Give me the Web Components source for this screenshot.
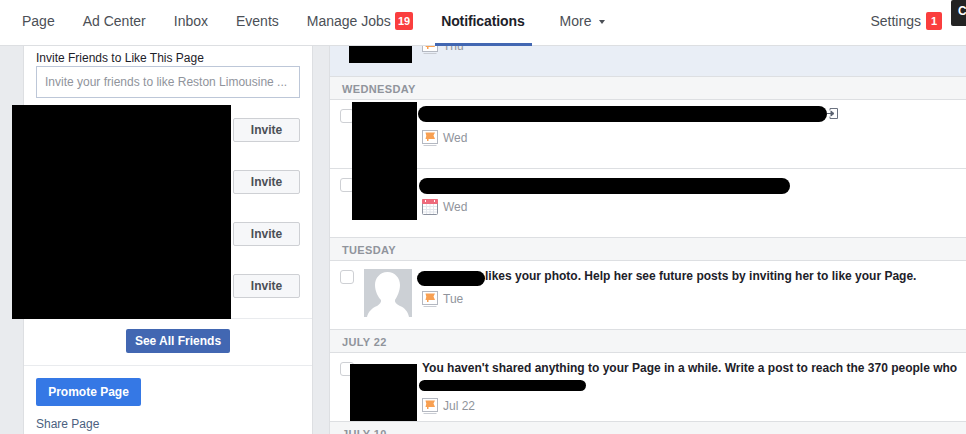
<!DOCTYPE html>
<html><head><meta charset="utf-8"><style>
html,body{margin:0;padding:0;height:434px;overflow:hidden;background:#e9ebee;font-family:"Liberation Sans",Arial,sans-serif}
</style></head><body>
<fb-app></fb-app>
<script>
const def=(name,css,html)=>{customElements.define(name,class extends HTMLElement{
  constructor(){super();this.attachShadow({mode:'open'}).innerHTML=`<style>${css}</style>${typeof html==='function'?html(this):html}`;}
});};
const A=(e,n,d='')=>e.getAttribute(n)??d;
const FLAG=`<svg width="16" height="16" viewBox="0 0 16 16"><rect x=".5" y=".5" width="15" height="13" fill="#fff" stroke="#b4b8c1"/><path d="M1.500 15.500h13" stroke="#c9ccd3"/><path d="M3.500 2.500H13l-1.500 3L13 9H6.500v2H5V9H3.500l.8-3.200z" fill="#f8a052"/></svg>`;
const CAL=`<svg width="16" height="16" viewBox="0 0 16 16"><rect x=".5" y=".5" width="15" height="15" rx="1" fill="#fff" stroke="#8d93a0"/><rect x="0" y="0" width="16" height="5" rx="1" fill="#ee6a7c"/><path d="M3.500 1v2M12.500 1v2" stroke="#fff"/><path d="M1 7.500h14M1 10.500h14M1 13h14M4.500 5v10M8 5v10M11.500 5v10" stroke="#e3e6ec"/></svg>`;
def('nav-tab',`:host{display:flex;align-items:center;height:45px;padding-bottom:3px;font-size:14px;color:#4b4f56;white-space:nowrap;position:relative;box-sizing:border-box}
:host([active]){font-weight:bold;color:#1d2129;letter-spacing:-.1px}
:host([active])::after{content:"";position:absolute;left:-6px;right:-7px;bottom:-1px;height:3px;background:#4267b2}`,`<span><slot></slot></span>`);
def('nav-badge',`:host{display:block;background:#fa3e3e;color:#fff;font:bold 11px/18px "Liberation Sans",Arial,sans-serif;height:18px;box-sizing:border-box;padding:0 3px;min-width:16px;text-align:center;border-radius:2px;margin-left:5px;margin-bottom:3px}`,`<slot></slot>`);
def('top-bar',`:host{display:flex;height:45px;background:#fff;border-bottom:1px solid #dddfe2;padding-left:22px;position:relative}
.r{margin-left:auto;display:flex;align-items:center;margin-right:24px}
.dark{position:absolute;right:0;top:0;width:15px;height:26px;background:#232323;color:#fff;font:bold 12px/23px "Liberation Sans",Arial,sans-serif;border-radius:2px 0 0 2px;overflow:hidden;padding-left:7px;box-sizing:border-box}
.m{display:flex;gap:28px}
.mj{display:flex;align-items:center}
.mj nav-badge{margin-left:4px}
.tri{display:inline-block;width:0;height:0;border:3px solid transparent;border-top:4px solid #4b4f56;border-bottom:0;margin-left:7px;vertical-align:2px}
`,`<div class="m"><nav-tab>Page</nav-tab><nav-tab>Ad Center</nav-tab><nav-tab>Inbox</nav-tab><nav-tab>Events</nav-tab><div class="mj"><nav-tab>Manage Jobs</nav-tab><nav-badge>19</nav-badge></div><nav-tab active>Notifications</nav-tab><nav-tab style="margin-left:7px">More<span class="tri"></span></nav-tab></div>
<div class="r"><nav-tab>Settings</nav-tab><nav-badge>1</nav-badge></div><div class="dark">C</div>`);
def('invite-btn',`:host{display:block;width:67px;height:24px;box-sizing:border-box;border:1px solid #ced0d4;background:#f6f7f9;border-radius:2px;color:#4b4f56;font:bold 12px/22px "Liberation Sans",Arial,sans-serif;text-align:center}`,`<slot></slot>`);
def('side-panel',`:host{display:block;position:absolute;left:23px;top:46px;width:290px;height:388px;box-sizing:border-box;background:#fff;border:solid #dddfe2;border-width:0 1px;}
.a{padding:5px 12px 0;height:273px;box-sizing:border-box;border-bottom:1px solid #e9ebee;position:relative}
.t{font-size:12px;line-height:15px;color:#1d2129}
.i{height:32px;box-sizing:border-box;border:1px solid #bdc7d8;font-size:12px;line-height:30px;color:#90949c;padding-left:8px;white-space:nowrap;overflow:hidden}
.l{display:flex;flex-direction:column;gap:28px;align-items:flex-end;margin-top:20px}
.redact{position:absolute;left:-12px;top:59px;width:219px;height:214px;background:#000}
.b{border-bottom:1px solid #e9ebee;display:flex;align-items:flex-start;padding:10px 0 0 102px;height:36px}
.sa{background:#4267b2;color:#fff;font:bold 12px/24px "Liberation Sans",Arial,sans-serif;width:104px;height:24px;text-align:center;border-radius:2px}
.c{padding:12px 12px 0}
.p{width:105px;height:28px;background:#3578e5;color:#fff;font:bold 12px/28px "Liberation Sans",Arial,sans-serif;text-align:center;border-radius:2px}
.s{margin-top:11px;font-size:12px;line-height:15px;color:#4b5f80}
`,`<div class="a"><div class="t">Invite Friends to Like This Page</div><div class="i">Invite your friends to like Reston Limousine ...</div>
<div class="l"><invite-btn>Invite</invite-btn><invite-btn>Invite</invite-btn><invite-btn>Invite</invite-btn><invite-btn>Invite</invite-btn></div><div class="redact"></div></div>
<div class="b"><div class="sa">See All Friends</div></div>
<div class="c"><div class="p">Promote Page</div><div class="s">Share Page</div></div>`);
def('day-head',`:host{display:block;height:22px;background:#f5f6f7;border-top:1px solid #dddfe2;border-bottom:1px solid #dddfe2;padding-left:12px;font:bold 11px/24px "Liberation Sans",Arial,sans-serif;color:#90949c;letter-spacing:.35px;overflow:hidden}`,`<slot></slot>`);
def('notif-row',`:host{display:block;position:relative;height:68px;background:#fff;box-sizing:border-box}
:host([sep]){border-bottom:1px solid #dddfe2;height:69px}
.cb{position:absolute;left:10px;top:9px;width:14px;height:14px;box-sizing:border-box;border:1px solid #ced0d4;background:#fff;border-radius:3px}
.tx{position:absolute;left:92px;top:7px;font:bold 12px/16px "Liberation Sans",Arial,sans-serif;color:#1d2129;white-space:nowrap}
.meta{position:absolute;left:92px;top:30px;display:flex;align-items:center;gap:5px;font-size:12px;color:#90949c;height:16px}
svg{display:block}
`,e=>`<div class="cb"></div><div class="tx" style="left:${A(e,'tl',92)}px"><slot></slot></div>
<div class="meta" style="top:${A(e,'mt',30)}px">${A(e,'icon')==='cal'?CAL:FLAG}<span>${A(e,'when')}</span></div><slot name="over"></slot>`);
def('black-box',`:host{display:block;position:absolute;background:#000}`,``);
def('notif-list',`:host{display:block;position:absolute;left:329px;top:46px;right:0;height:388px;background:#fff;border-left:1px solid #dddfe2;overflow:hidden}
.top{height:30px;background:#e9eef6;position:relative;overflow:hidden}
.meta{position:absolute;left:92px;top:-8px;display:flex;gap:5px;font-size:12px;line-height:16px;color:#90949c}
svg{display:block}
.rx{position:absolute;background:#000}
`,`<div class="top"><div class="meta">${FLAG}<span>Thu</span></div><div class="rx" style="left:19px;top:0;width:63px;height:17px"></div></div>
<day-head>WEDNESDAY</day-head>
<notif-row sep when="Wed">
<black-box slot="over" style="left:22px;top:2px;width:65px;height:118px;z-index:2"></black-box>
<black-box slot="over" style="left:88px;top:6px;width:409px;height:16px;border-radius:8px"></black-box>
<svg slot="over" style="position:absolute;left:497px;top:8px" width="11" height="12" viewBox="0 0 11 12"><path d="M3 2.500V.5h7.500v10H3V8.500" fill="none" stroke="#6b7280"/><path d="M0 5.500h5.500M4 3l3 2.500L4 8z" stroke="#5b6270" fill="#5b6270"/></svg>
</notif-row>
<notif-row when="Wed" icon="cal">
<black-box slot="over" style="left:89px;top:9px;width:371px;height:16px;border-radius:8px"></black-box>
</notif-row>
<day-head>TUESDAY</day-head>
<notif-row when="Tue" tl="155">likes your photo. Help her see future posts by inviting her to like your Page.
<svg slot="over" style="position:absolute;left:34px;top:8px" width="48" height="48" viewBox="0 0 48 48"><rect width="48" height="48" fill="#ccd0d5"/><path d="M23.500 3C31 3 36 9 36 16C36 22 33 28 31 31C30.500 33 32 35 36 37C41 39 44 43 45 48H3C4 43 8 39 13 37C16 35 17.500 33 17 31C14 28 11 22 11 16C11 9 16 3 23.500 3z" fill="#fff"/></svg>
<black-box slot="over" style="left:87px;top:10px;width:68px;height:15px;border-radius:8px"></black-box>
</notif-row>
<day-head>JULY 22</day-head>
<notif-row when="Jul 22" mt="45">You haven't shared anything to your Page in a while. Write a post to reach the 370 people who
<black-box slot="over" style="left:20px;top:11px;width:67px;height:57px"></black-box>
<black-box slot="over" style="left:89px;top:27px;width:167px;height:11px;border-radius:6px"></black-box>
</notif-row>
<day-head>JULY 10</day-head>`);
def('fb-app',`:host{display:block;position:relative;width:966px;height:434px;overflow:hidden}`,`<top-bar></top-bar><side-panel></side-panel><notif-list></notif-list>`);
</script></body></html>
